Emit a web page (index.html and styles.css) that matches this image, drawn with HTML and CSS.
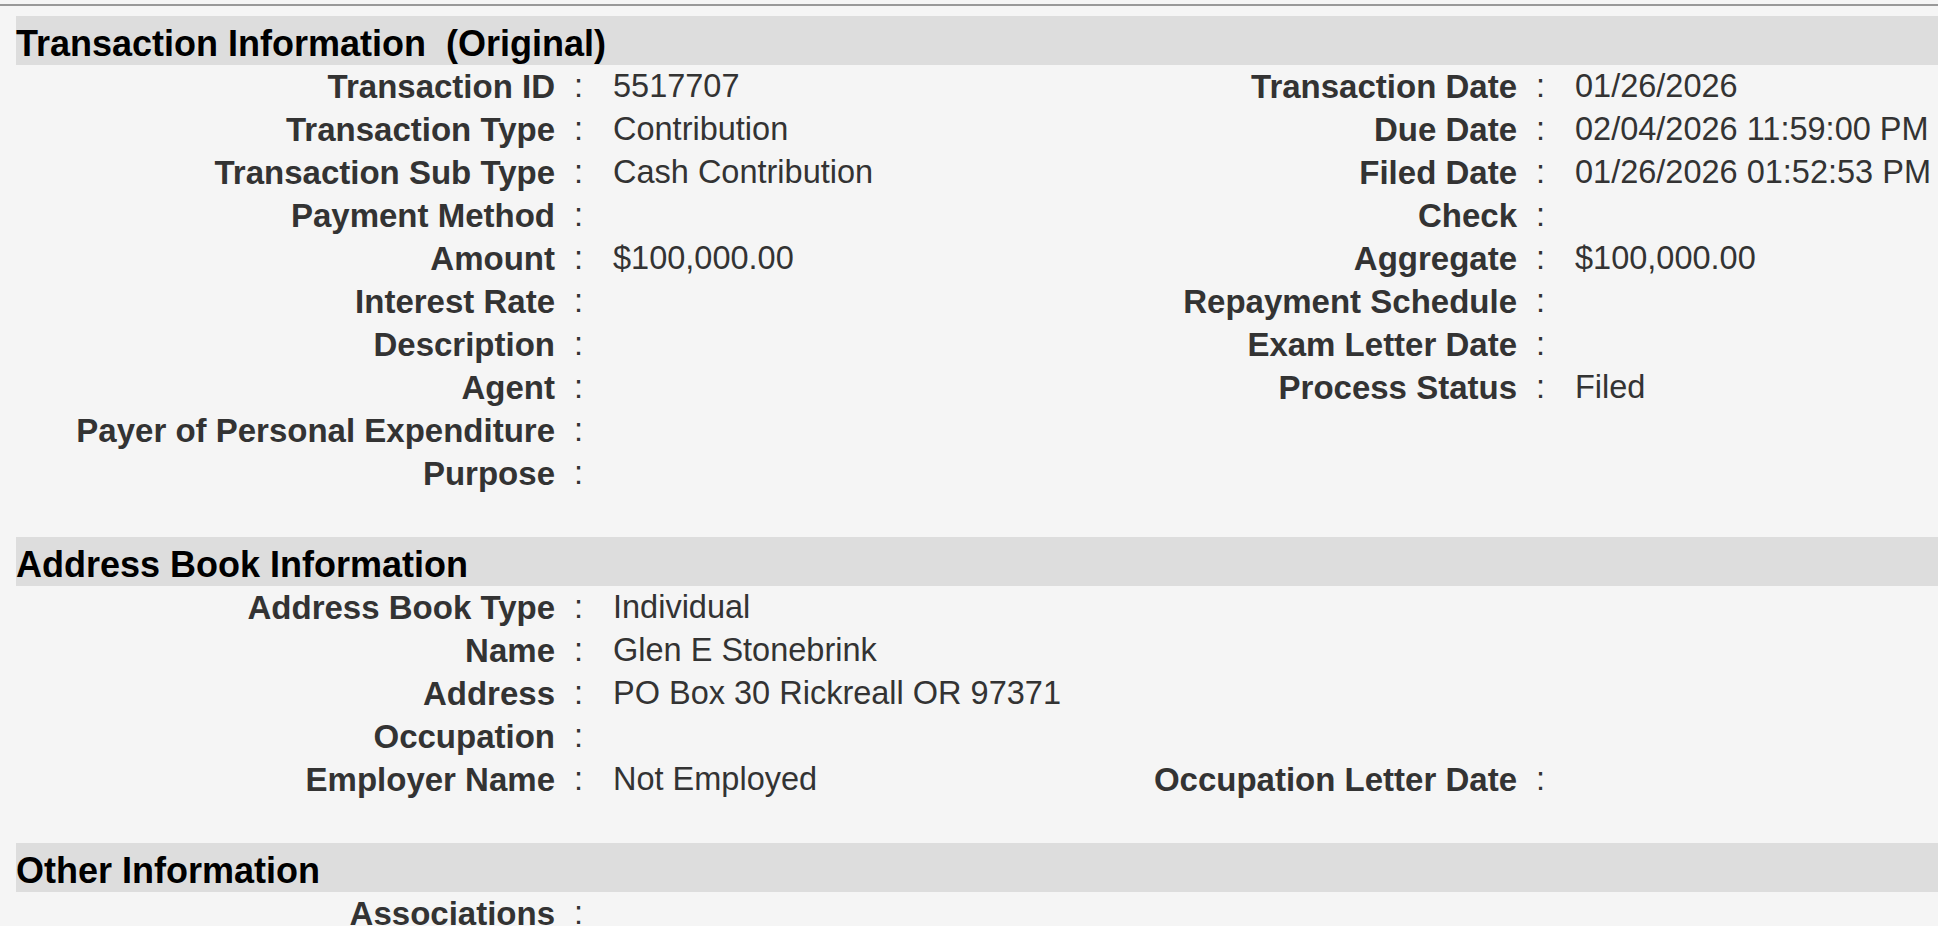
FILE: index.html
```html
<!DOCTYPE html>
<html lang="en">
<head>
  <meta charset="UTF-8" />
  <meta name="viewport" content="width=device-width, initial-scale=1.0" />
  <title>Transaction Detail</title>
  <link rel="stylesheet" href="styles.css">
</head>
<body>
  <div class="rule"></div>

  <div class="page">
    <section class="panel">
      <h2 class="panel-title">Transaction Information&nbsp; (Original)</h2>
      <div class="fields">
        <div class="label">Transaction ID</div><div class="sep">:</div><div class="value">5517707</div>
        <div class="label">Transaction Date</div><div class="sep">:</div><div class="value">01/26/2026</div>

        <div class="label">Transaction Type</div><div class="sep">:</div><div class="value">Contribution</div>
        <div class="label">Due Date</div><div class="sep">:</div><div class="value">02/04/2026 11:59:00 PM</div>

        <div class="label">Transaction Sub Type</div><div class="sep">:</div><div class="value">Cash Contribution</div>
        <div class="label">Filed Date</div><div class="sep">:</div><div class="value">01/26/2026 01:52:53 PM</div>

        <div class="label">Payment Method</div><div class="sep">:</div><div class="value"></div>
        <div class="label">Check</div><div class="sep">:</div><div class="value"></div>

        <div class="label">Amount</div><div class="sep">:</div><div class="value">$100,000.00</div>
        <div class="label">Aggregate</div><div class="sep">:</div><div class="value">$100,000.00</div>

        <div class="label">Interest Rate</div><div class="sep">:</div><div class="value"></div>
        <div class="label">Repayment Schedule</div><div class="sep">:</div><div class="value"></div>

        <div class="label">Description</div><div class="sep">:</div><div class="value"></div>
        <div class="label">Exam Letter Date</div><div class="sep">:</div><div class="value"></div>

        <div class="label">Agent</div><div class="sep">:</div><div class="value"></div>
        <div class="label">Process Status</div><div class="sep">:</div><div class="value">Filed</div>

        <div class="label">Payer of Personal Expenditure</div><div class="sep">:</div><div class="value"></div>
        <div class="label"></div><div class="sep"></div><div class="value"></div>

        <div class="label">Purpose</div><div class="sep">:</div><div class="value"></div>
        <div class="label"></div><div class="sep"></div><div class="value"></div>
      </div>
    </section>

    <section class="panel">
      <h2 class="panel-title">Address Book Information</h2>
      <div class="fields">
        <div class="label">Address Book Type</div><div class="sep">:</div><div class="value">Individual</div>
        <div class="label"></div><div class="sep"></div><div class="value"></div>

        <div class="label">Name</div><div class="sep">:</div><div class="value">Glen E Stonebrink</div>
        <div class="label"></div><div class="sep"></div><div class="value"></div>

        <div class="label">Address</div><div class="sep">:</div><div class="value">PO Box 30 Rickreall OR 97371</div>
        <div class="label"></div><div class="sep"></div><div class="value"></div>

        <div class="label">Occupation</div><div class="sep">:</div><div class="value"></div>
        <div class="label"></div><div class="sep"></div><div class="value"></div>

        <div class="label">Employer Name</div><div class="sep">:</div><div class="value">Not Employed</div>
        <div class="label">Occupation Letter Date</div><div class="sep">:</div><div class="value"></div>
      </div>
    </section>

    <section class="panel">
      <h2 class="panel-title">Other Information</h2>
      <div class="fields">
        <div class="label">Associations</div><div class="sep">:</div><div class="value"></div>
        <div class="label"></div><div class="sep"></div><div class="value"></div>
      </div>
    </section>
  </div>
</body>
</html>
```

FILE: styles.css
```css
* { box-sizing: border-box; margin: 0; padding: 0; }
html, body { overflow: hidden; }
body {
  font-family: "Liberation Sans", Arial, Helvetica, sans-serif;
  background-color: #f5f5f5;
  color: #333;
}
.rule {
  margin-top: 4px;
  height: 2px;
  background-color: #999;
}
.page { padding: 10px 0 0 16px; }
.panel + .panel { margin-top: 42px; }
.panel-title {
  background-color: #dddddd;
  color: #000;
  font-size: 36px;
  font-weight: bold;
  height: 49px;
  line-height: 43px;
  padding-top: 6px;
  white-space: nowrap;
}
.fields {
  display: grid;
  grid-template-columns: 539px 58px 365px 539px 58px 1fr;
  font-size: 32.5px;
  line-height: 43px;
  white-space: nowrap;
}
.label {
  font-size: 33px;
  font-weight: bold;
  text-align: right;
}
.sep { padding-left: 19px; }
```
